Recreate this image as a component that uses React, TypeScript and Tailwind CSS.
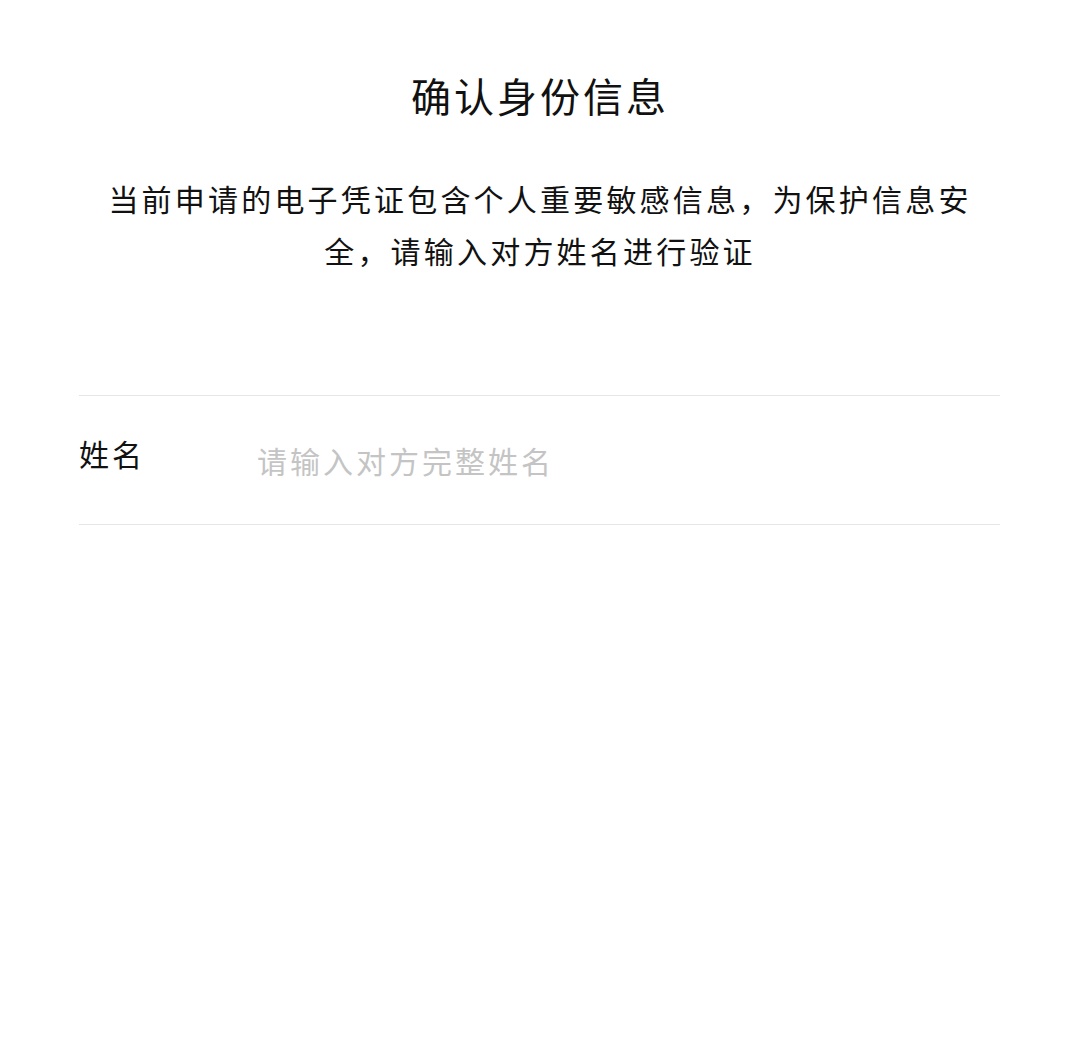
import { useState } from "react";

const cjk = "font-['Noto_Sans_CJK_SC','Noto_Sans',sans-serif]";

export default function App() {
  const [name, setName] = useState("");

  return (
    <div className={`min-h-screen bg-white text-[#111] ${cjk}`}>
      <div className="pt-[67px] text-center">
        <h1 className="text-[40px] leading-[56px] tracking-[3px] font-normal">
          确认身份信息
        </h1>
        <p className="mt-[49px] px-[103px] text-[30px] leading-[52px] tracking-[3.2px]">
          当前申请的电子凭证包含个人重要敏感信息，为保护信息安全，请输入对方姓名进行验证
        </p>
      </div>

      <div className="mt-[119px] pl-[79px] pr-[80px]">
        <div className="flex items-center h-[130px] border-y border-[#e6e6e6]">
          <label className="w-[178px] shrink-0 pb-[14px] text-[30px] tracking-[3px]">
            姓名
          </label>
          <input
            value={name}
            onChange={(e) => setName(e.target.value)}
            placeholder="请输入对方完整姓名"
            className="flex-1 bg-transparent outline-none text-[30px] tracking-[3px] placeholder:text-[#c4c4c4]"
          />
        </div>
      </div>
    </div>
  );
}
